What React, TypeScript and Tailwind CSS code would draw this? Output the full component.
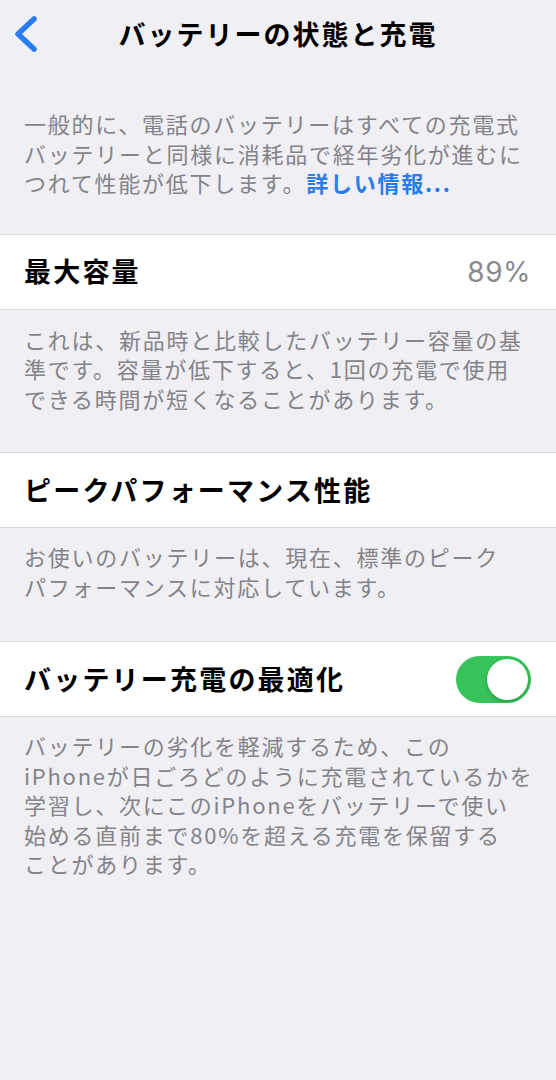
import React from "react";

const jp = { fontFamily: '"Noto Sans CJK JP", "Noto Sans", sans-serif' };

function Footer({ lines, className = "" }: { lines: React.ReactNode[]; className?: string }) {
  return (
    <div className={`px-6 text-[22px] leading-[29.5px] tracking-[1.75px] text-[#838388] ${className}`}>
      {lines.map((l, i) => (
        <div key={i} className="whitespace-nowrap">
          {l}
        </div>
      ))}
    </div>
  );
}

function Row({ children }: { children: React.ReactNode }) {
  return (
    <div className="flex h-[76px] items-center justify-between border-y border-[#d9d9de] bg-white pl-6 pr-[25px]">
      {children}
    </div>
  );
}

export default function App() {
  return (
    <div style={jp} className="min-h-[1080px] w-[556px] bg-[#efeff4] text-black">
      {/* nav bar */}
      <div className="relative flex h-[68px] items-center justify-center">
        <svg className="absolute left-[11px] top-[14px]" width="28" height="40" viewBox="0 0 28 40">
          <path d="M23 5 L7 20 L23 35" fill="none" stroke="#2a7cf2" strokeWidth="5.5" strokeLinecap="round" strokeLinejoin="round" />
        </svg>
        <h1 className="text-[27px] font-bold tracking-[2px]">バッテリーの状態と充電</h1>
      </div>

      <Footer
        className="pt-[41px] pb-[36px]"
        lines={[
          "一般的に、電話のバッテリーはすべての充電式",
          "バッテリーと同様に消耗品で経年劣化が進むに",
          <>
            つれて性能が低下します。<span className="font-semibold text-[#2a7ce8]">詳しい情報...</span>
          </>,
        ]}
      />

      <Row>
        <span className="text-[27px] font-semibold tracking-[2.2px]">最大容量</span>
        <span className="text-[28px] tracking-[0.5px] text-[#8a8a8e]" style={{ fontFamily: '"Inter", "Noto Sans", sans-serif' }}>
          89%
        </span>
      </Row>

      <Footer
        className="pt-[15px] pb-[39px]"
        lines={[
          "これは、新品時と比較したバッテリー容量の基",
          "準です。容量が低下すると、1回の充電で使用",
          "できる時間が短くなることがあります。",
        ]}
      />

      <Row>
        <span className="text-[27px] font-semibold tracking-[2.2px]">ピークパフォーマンス性能</span>
      </Row>

      <Footer
        className="pt-[14px] pb-[40px]"
        lines={["お使いのバッテリーは、現在、標準のピーク", "パフォーマンスに対応しています。"]}
      />

      <Row>
        <span className="text-[27px] font-semibold tracking-[2.2px]">バッテリー充電の最適化</span>
        {/* switch, on */}
        <div className="flex h-[47px] w-[75px] items-center justify-end rounded-full bg-[#35c35a] p-[3px]">
          <div className="h-[41px] w-[41px] rounded-full bg-white shadow-[0_2px_4px_rgba(0,0,0,0.2)]" />
        </div>
      </Row>

      <Footer
        className="pt-[14px]"
        lines={[
          "バッテリーの劣化を軽減するため、この",
          "iPhoneが日ごろどのように充電されているかを",
          "学習し、次にこのiPhoneをバッテリーで使い",
          "始める直前まで80%を超える充電を保留する",
          "ことがあります。",
        ]}
      />
    </div>
  );
}
